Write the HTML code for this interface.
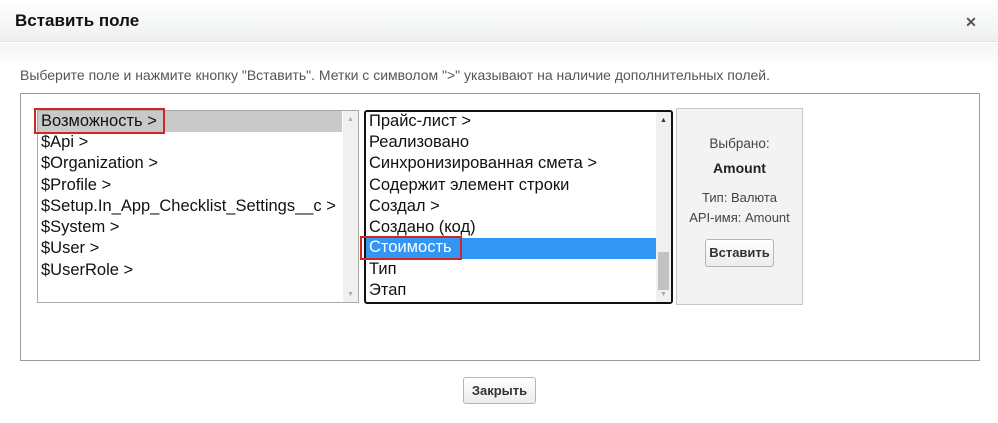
<!DOCTYPE html>
<html><head><meta charset="utf-8"><style>
*{margin:0;padding:0;box-sizing:border-box}
body{width:998px;height:423px;background:#fff;font-family:"Liberation Sans",Arial,sans-serif;position:relative;overflow:hidden}
.hdr{position:absolute;left:0;top:0;width:998px;height:42px;background:linear-gradient(#fff,#eef0f0);border-bottom:1px solid #e2e4e4}
.hdr h1{position:absolute;left:15px;top:11px;font-size:17px;font-weight:bold;color:#111}
.x{position:absolute;left:961px;top:12px;width:20px;height:20px;font-size:14px;font-weight:bold;color:#555;text-align:center;line-height:20px}
.sub{position:absolute;left:0;top:43px;width:998px;height:25px;background:linear-gradient(#f4f5f5,#fff)}
.desc{position:absolute;left:20px;top:67px;font-size:14px;color:#555}
.panel{position:absolute;left:20px;top:93px;width:960px;height:268px;border:1px solid #9a9a9a}
.list{position:absolute;background:#fff;font-size:16.5px;color:#111;overflow:hidden}
.row{position:absolute;left:1px;height:21px;line-height:21px;white-space:nowrap;padding-left:2px}
.sb{position:absolute;top:0;width:15px;background:#f0f0f0}
.box{position:absolute;left:676px;top:108px;width:127px;height:197px;border:1px solid #c8c8c8;background:#f3f3f3;text-align:center;font-size:13px;color:#444}
.btn{position:absolute;border:1px solid #b5b5b5;border-radius:3px;background:linear-gradient(#fff,#ececec);font-size:13px;font-weight:bold;color:#333;text-align:center}
.red{position:absolute;border:2px solid #d0262b}
</style></head><body>
<div class="hdr"><h1>Вставить поле</h1><div class="x">✕</div></div>
<div class="sub"></div>
<div class="desc">Выберите поле и нажмите кнопку "Вставить". Метки с символом "&gt;" указывают на наличие дополнительных полей.</div>
<div class="panel"></div>

<div class="list" style="left:37px;top:110px;width:322px;height:193px;border:1px solid #aaa">
 <div style="position:absolute;left:0;top:0;width:304px;height:21px;background:#c9c9c9"></div>
 <div class="row" style="top:0">Возможность &gt;</div>
 <div class="row" style="top:21px">$Api &gt;</div>
 <div class="row" style="top:42px">$Organization &gt;</div>
 <div class="row" style="top:63.5px">$Profile &gt;</div>
 <div class="row" style="top:85px">$Setup.In_App_Checklist_Settings__c &gt;</div>
 <div class="row" style="top:106px">$System &gt;</div>
 <div class="row" style="top:127px">$User &gt;</div>
 <div class="row" style="top:148.5px">$UserRole &gt;</div>
 <div class="sb" style="right:0;height:191px"><div style="text-align:center;font-size:7px;color:#aaa;margin-top:5px">▲</div><div style="position:absolute;bottom:4px;width:15px;text-align:center;font-size:7px;color:#aaa">▼</div></div>
</div>
<div class="red" style="left:34px;top:108px;width:131px;height:26px"></div>

<div class="list" style="left:364px;top:110px;width:309px;height:194px;border:2px solid #111;border-radius:3px">
 <div class="row" style="top:-1px">Прайс-лист &gt;</div>
 <div class="row" style="top:20px">Реализовано</div>
 <div class="row" style="top:41px">Синхронизированная смета &gt;</div>
 <div class="row" style="top:62.5px">Содержит элемент строки</div>
 <div class="row" style="top:84px">Создал &gt;</div>
 <div class="row" style="top:105px">Создано (код)</div>
 <div style="position:absolute;left:0;top:126px;width:290px;height:21px;background:#3296f5"></div>
 <div class="row" style="top:125px;color:#fff">Стоимость</div>
 <div class="row" style="top:147px">Тип</div>
 <div class="row" style="top:168px">Этап</div>
 <div class="sb" style="right:0;height:190px"><div style="text-align:center;font-size:7px;color:#333;margin-top:5px">▲</div><div style="position:absolute;left:2px;top:140px;width:11px;height:38px;background:#c2c2c2"></div><div style="position:absolute;bottom:4px;width:15px;text-align:center;font-size:7px;color:#aaa">▼</div></div>
</div>
<div class="red" style="left:360px;top:236px;width:102px;height:24px"></div>

<div class="box">
 <div style="margin-top:27px;font-size:13.5px">Выбрано:</div>
 <div style="margin-top:9px;font-size:14px;font-weight:bold;color:#222">Amount</div>
 <div style="margin-top:14px">Тип: Валюта</div>
 <div style="margin-top:5px">API-имя: Amount</div>
</div>
<div class="btn" style="left:705px;top:239px;width:69px;height:28px;line-height:26px">Вставить</div>
<div class="btn" style="left:463px;top:377px;width:73px;height:27px;line-height:25px">Закрыть</div>
</body></html>
